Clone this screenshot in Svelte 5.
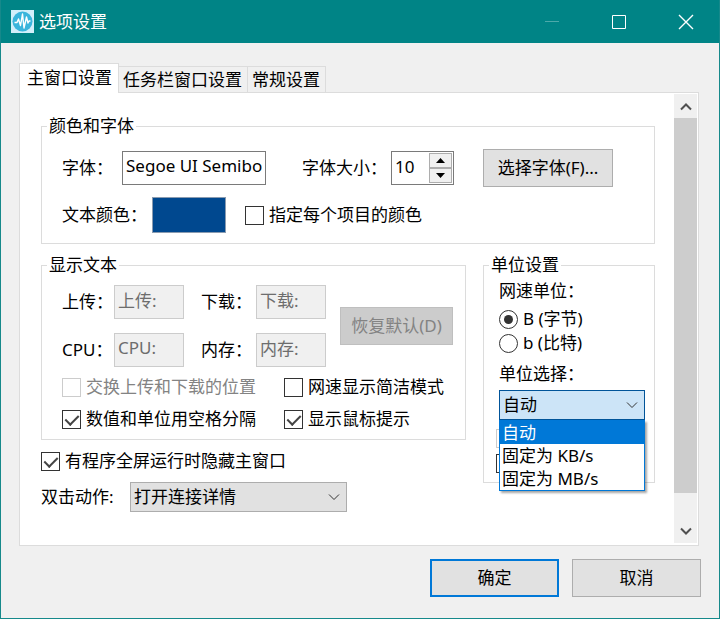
<script>
  const tabs = ["主窗口设置", "任务栏窗口设置", "常规设置"];
  const unitOptions = ["自动", "固定为 KB/s", "固定为 MB/s"];

  let activeTab = $state(0);
  let fontName = $state("Segoe UI Semibold");
  let fontSize = $state(10);
  let specifyEach = $state(false);
  let swapUpDown = $state(false);
  let separateWithSpace = $state(true);
  let conciseMode = $state(false);
  let showToolTip = $state(true);
  let hideOnFullscreen = $state(true);
  let unitBase = $state("byte");
  let speedUnit = $state(0);
  let unitListOpen = $state(true);

  const items = $state([
    { id: "upload", label: "上传：", value: "上传:" },
    { id: "download", label: "下载：", value: "下载:" },
    { id: "cpu", label: "CPU：", value: "CPU:" },
    { id: "memory", label: "内存：", value: "内存:" }
  ]);

  function selectUnit(index) {
    speedUnit = index;
    unitListOpen = false;
  }
</script>

{#snippet arrow()}
  <svg class="arrow" viewBox="0 0 12 8" aria-hidden="true">
    <path d="M1 1.5 6 6.5 11 1.5" />
  </svg>
{/snippet}

<div class="window">
  <header>
    <svg class="logo" viewBox="0 0 23 23" aria-hidden="true">
      <rect width="23" height="23" fill="#d3effa" />
      <circle cx="11.5" cy="11.5" r="10" fill="#3bb5dc" />
      <path
        d="M3.5 12.5H6L7.5 9l2 6.5L11.5 4l1.5 14 2.5-11 1.5 6 1-2h1.5"
        fill="none"
        stroke="#fff"
        stroke-width="1.4"
        stroke-linejoin="round" />
    </svg>
    <h1>选项设置</h1>
    <div class="controls">
      <button aria-label="最小化" disabled>
        <svg viewBox="0 0 16 16"><path d="M1 7.5H15" /></svg>
      </button>
      <button aria-label="最大化">
        <svg viewBox="0 0 16 16"><path d="M1.5 1.5h13v13h-13z" /></svg>
      </button>
      <button aria-label="关闭">
        <svg viewBox="0 0 16 16"><path d="M1 1 15 15M15 1 1 15" stroke-width="1.4" /></svg>
      </button>
    </div>
  </header>

  <main>
    <div class="tabs" role="tablist">
      {#each tabs as tab, i}
        <button
          role="tab"
          aria-selected={activeTab === i}
          class:active={activeTab === i}
          onclick={() => (activeTab = i)}>{tab}</button>
      {/each}
    </div>

    <div class="panel">
      <div class="content">
        <fieldset class="fonts">
          <legend>颜色和字体</legend>
          <div class="row font-row">
            <label class="name-label" for="font-name">字体：</label>
            <input id="font-name" class="font-name" type="text" bind:value={fontName} />
            <label class="size-label" for="font-size">字体大小：</label>
            <div class="spin">
              <input id="font-size" type="text" inputmode="numeric" bind:value={fontSize} />
              <div class="spin-buttons">
                <button aria-label="增大" onclick={() => fontSize++}>
                  <svg viewBox="0 0 9 5"><path d="M0 5 4.5 0 9 5z" /></svg>
                </button>
                <button aria-label="减小" onclick={() => fontSize--}>
                  <svg viewBox="0 0 9 5"><path d="M0 0 4.5 5 9 0z" /></svg>
                </button>
              </div>
            </div>
            <button class="push choose">选择字体(F)...</button>
          </div>
          <div class="row color-row">
            <span class="color-label" id="color-label">文本颜色：</span>
            <button class="swatch" aria-labelledby="color-label"></button>
            <label class="check">
              <input type="checkbox" bind:checked={specifyEach} />指定每个项目的颜色
            </label>
          </div>
        </fieldset>

        <div class="columns">
          <div class="left">
            <fieldset>
              <legend>显示文本</legend>
              <div class="row text-row">
                <div class="items">
                  {#each items as item}
                    <label for={item.id}>{item.label}</label>
                    <input id={item.id} type="text" bind:value={item.value} disabled />
                  {/each}
                </div>
                <button class="push restore" disabled>恢复默认(D)</button>
              </div>
              <div class="checks">
                <label class="check disabled">
                  <input type="checkbox" bind:checked={swapUpDown} disabled />交换上传和下载的位置
                </label>
                <label class="check">
                  <input type="checkbox" bind:checked={conciseMode} />网速显示简洁模式
                </label>
                <label class="check">
                  <input type="checkbox" bind:checked={separateWithSpace} />数值和单位用空格分隔
                </label>
                <label class="check">
                  <input type="checkbox" bind:checked={showToolTip} />显示鼠标提示
                </label>
              </div>
            </fieldset>

            <label class="check fullscreen">
              <input type="checkbox" bind:checked={hideOnFullscreen} />有程序全屏运行时隐藏主窗口
            </label>
            <div class="row action-row">
              <label for="double-click">双击动作:</label>
              <div class="combo">
                <select id="double-click">
                  <option>打开连接详情</option>
                </select>
                {@render arrow()}
              </div>
            </div>
          </div>

          <fieldset class="units">
            <legend id="unit-legend">单位设置</legend>
            <div class="unit-body">
              <p>网速单位：</p>
              <label class="check">
                <input type="radio" name="base" value="byte" bind:group={unitBase} />B (字节)
              </label>
              <label class="check">
                <input type="radio" name="base" value="bit" bind:group={unitBase} />b (比特)
              </label>
              <label class="unit-label" for="speed-unit">单位选择：</label>
              <div class="combo open">
                <select id="speed-unit" bind:value={speedUnit}>
                  {#each unitOptions as option, i}
                    <option value={i}>{option}</option>
                  {/each}
                </select>
                {@render arrow()}
                {#if unitListOpen}
                  <div class="list" role="listbox" aria-labelledby="unit-legend">
                    {#each unitOptions as option, i}
                      <button
                        role="option"
                        aria-selected={speedUnit === i}
                        class:selected={speedUnit === i}
                        onclick={() => selectUnit(i)}>{option}</button>
                    {/each}
                  </div>
                {/if}
              </div>
            </div>
            <!-- covered by the list while it is open -->
            <div class="unit-extra">
              <input type="checkbox" aria-labelledby="unit-legend" disabled />
              <input type="checkbox" aria-labelledby="unit-legend" />
            </div>
          </fieldset>
        </div>
      </div>

      <div class="scrollbar">
        <button aria-label="向上滚动">
          <svg viewBox="0 0 12 9"><path d="M1 7.5 6 2.5 11 7.5" /></svg>
        </button>
        <div class="thumb"></div>
        <button class="down" aria-label="向下滚动">
          <svg viewBox="0 0 12 9"><path d="M1 1.5 6 6.5 11 1.5" /></svg>
        </button>
      </div>
    </div>

    <footer>
      <button class="push default">确定</button>
      <button class="push">取消</button>
    </footer>
  </main>
</div>

<style>
  :global(body) {
    margin: 0;
  }

  .window,
  .window * {
    box-sizing: border-box;
  }

  .window {
    border: 1px solid #16898b;
    border-top-width: 0;
    background: #f0f0f0;
    color: #000;
    font-family: "Noto Sans", "Noto Sans CJK SC", sans-serif;
    font-size: 17px;
    line-height: 24px;
  }

  button,
  input,
  select {
    margin: 0;
    padding: 0;
    border: 0;
    border-radius: 0;
    background: none;
    color: inherit;
    font: inherit;
    outline: none;
  }

  header {
    display: flex;
    align-items: center;
    height: 43px;
    padding-left: 10px;
    background: #008486;
    color: #fff;
  }

  .logo {
    width: 23px;
    height: 23px;
    margin-right: 5px;
  }

  h1 {
    flex: 1;
    margin: 0;
    font-size: 17px;
    font-weight: normal;
  }

  .controls {
    display: flex;
    height: 100%;
  }

  .controls button {
    display: flex;
    align-items: center;
    justify-content: center;
    width: 67px;
  }

  .controls button:disabled {
    opacity: 0.3;
  }

  .controls svg {
    width: 16px;
    height: 16px;
    fill: none;
    stroke: #fff;
  }

  main {
    padding: 20px 18px 21px 18px;
  }

  .tabs {
    display: flex;
    align-items: flex-end;
  }

  .tabs button {
    height: 26px;
    padding: 0 5px 0 4px;
    border: 1px solid #dcdcdc;
    border-bottom: 0;
    border-left: 0;
    white-space: nowrap;
  }

  .tabs button.active {
    position: relative;
    height: 30px;
    margin-bottom: -1px;
    padding: 0 6px 1px 7px;
    border-left: 1px solid #dcdcdc;
    background: #fff;
  }

  .panel {
    display: flex;
    margin-right: 2px;
    border: 1px solid #dcdcdc;
    background: #fff;
  }

  .content {
    flex: 1;
    min-width: 0;
    padding: 21px 19px 33px 21px;
  }

  fieldset {
    min-width: 0;
    margin: 0;
    padding: 0;
    border: 1px solid #dcdcdc;
  }

  legend {
    height: 24px;
    margin-left: 5px;
    padding: 0 2px;
  }

  .row {
    display: flex;
    align-items: center;
  }

  label {
    white-space: nowrap;
  }

  input[type="text"] {
    height: 34px;
    padding: 0 3px 5px;
    border: 1px solid #7a7a7a;
    background: #fff;
  }

  input[type="text"]:disabled {
    border-color: #ccc;
    background: #f0f0f0;
    color: #6d6d6d;
  }

  .push {
    height: 38px;
    border: 1px solid #adadad;
    background: #e1e1e1;
    white-space: nowrap;
  }

  .push:disabled {
    border-color: #bfbfbf;
    background: #ccc;
    color: #838383;
  }

  .push.default {
    border: 2px solid #0078d7;
  }

  .fonts {
    padding-bottom: 10px;
  }

  .font-row,
  .color-row {
    padding-left: 20px;
  }

  .font-row {
    padding-top: 11px;
  }

  .color-row {
    padding-top: 10px;
  }

  .name-label {
    width: 60px;
  }

  .font-name {
    width: 144px;
    margin-right: 36px;
  }

  .size-label {
    width: 89px;
  }

  .spin {
    display: flex;
    width: 63px;
    height: 34px;
    margin-right: 29px;
    padding: 1px;
    border: 1px solid #7a7a7a;
  }

  .spin input[type="text"] {
    flex: 1;
    min-width: 0;
    height: 30px;
    padding: 0 2px 4px;
    border: 0;
  }

  .spin-buttons {
    display: flex;
    flex-direction: column;
    width: 23px;
  }

  .spin-buttons button {
    display: flex;
    flex: 1;
    align-items: center;
    justify-content: center;
    border: 1px solid #adadad;
    background: #f0f0f0;
  }

  .spin-buttons svg {
    width: 9px;
    height: 5px;
  }

  .choose {
    width: 130px;
  }

  .color-label {
    width: 90px;
  }

  .swatch {
    width: 74px;
    height: 36px;
    margin-right: 19px;
    border: 1px solid #8a9bb0;
    background: #00488f;
  }

  .check {
    display: flex;
    align-items: center;
    gap: 5px;
    height: 24px;
  }

  .check.disabled {
    color: #838383;
  }

  input[type="checkbox"],
  input[type="radio"] {
    display: flex;
    flex: none;
    justify-content: center;
    width: 19px;
    height: 19px;
    border: 1px solid #333;
    background: #fff;
    appearance: none;
  }

  input[type="checkbox"]:disabled {
    border-color: #ccc;
  }

  input[type="checkbox"]:checked::after {
    width: 6px;
    height: 11px;
    margin-top: 1px;
    border: solid #444;
    border-width: 0 2px 2px 0;
    content: "";
    transform: rotate(45deg);
  }

  input[type="radio"] {
    align-items: center;
    border-radius: 50%;
  }

  input[type="radio"]:checked::after {
    width: 9px;
    height: 9px;
    border-radius: 50%;
    background: #333;
    content: "";
  }

  .columns {
    display: grid;
    grid-template-columns: minmax(0, 1fr) 172px;
    gap: 17px;
    align-items: start;
    margin-top: 9px;
  }

  .text-row {
    gap: 14px;
    padding: 8px 12px 8px 20px;
  }

  .items {
    display: grid;
    grid-template-columns: 52px 1fr 72px 1fr;
    flex: 1;
    align-items: center;
    row-gap: 14px;
  }

  .items input {
    width: 100%;
    min-width: 0;
  }

  .items label:nth-of-type(even) {
    padding-left: 17px;
  }

  .restore {
    width: 113px;
  }

  .checks {
    display: grid;
    grid-template-columns: 222px 1fr;
    row-gap: 8px;
    padding: 0 0 8px 20px;
  }

  .fullscreen {
    margin-top: 9px;
  }

  .action-row {
    margin-top: 9px;
  }

  .action-row label {
    width: 89px;
  }

  .action-row .combo {
    width: 217px;
  }

  .combo {
    position: relative;
  }

  .combo select {
    display: block;
    width: 100%;
    height: 30px;
    padding: 0 24px 0 3px;
    border: 1px solid #adadad;
    background: #e1e1e1;
    appearance: none;
  }

  .combo.open select {
    border-color: #005499;
    background: #cce4f7;
  }

  .arrow {
    position: absolute;
    top: 11px;
    right: 7px;
    width: 12px;
    height: 8px;
    fill: none;
    stroke: #333;
    pointer-events: none;
  }

  .list {
    position: absolute;
    z-index: 1;
    top: 100%;
    right: 0;
    left: 0;
    border: 1px solid #0078d7;
    background: #fff;
    box-shadow: 2px 2px 2px rgba(0, 0, 0, 0.35);
  }

  .list button {
    display: block;
    width: 100%;
    height: 23px;
    padding-left: 2px;
    line-height: 23px;
    text-align: left;
  }

  .list button.selected {
    background: #0078d7;
    color: #fff;
  }

  .units {
    padding-bottom: 9px;
  }

  .unit-body {
    padding: 2px 9px 0 15px;
  }

  .unit-body p {
    margin: 0 0 4px;
  }

  .unit-label {
    display: block;
    margin: 7px 0 4px;
  }

  .unit-extra {
    display: flex;
    flex-direction: column;
    gap: 6px;
    padding: 9px 0 0 12px;
  }

  .scrollbar {
    display: flex;
    flex-direction: column;
    width: 23px;
    margin: 1px 1px 2px 0;
    background: #f0f0f0;
  }

  .scrollbar button {
    display: flex;
    align-items: center;
    justify-content: center;
    height: 24px;
  }

  .scrollbar svg {
    width: 12px;
    height: 9px;
    fill: none;
    stroke: #505050;
    stroke-width: 2;
  }

  .thumb {
    flex: 1;
    margin-bottom: 26px;
    background: #cdcdcd;
  }

  footer {
    display: flex;
    justify-content: flex-end;
    gap: 13px;
    margin-top: 13px;
  }

  footer .push {
    width: 129px;
  }
</style>
